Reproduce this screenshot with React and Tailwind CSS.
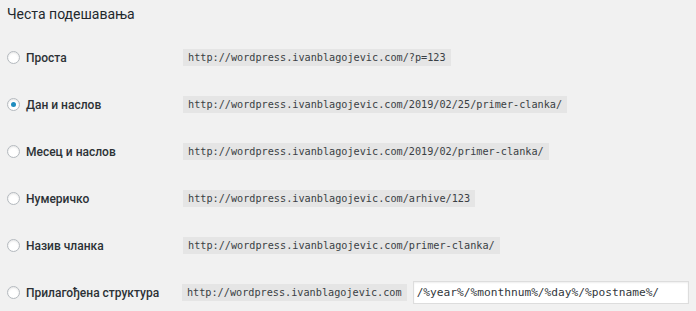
const options = [
  { label: "Проста", url: "http://wordpress.ivanblagojevic.com/?p=123" },
  { label: "Дан и наслов", url: "http://wordpress.ivanblagojevic.com/2019/02/25/primer-clanka/", checked: true },
  { label: "Месец и наслов", url: "http://wordpress.ivanblagojevic.com/2019/02/primer-clanka/" },
  { label: "Нумеричко", url: "http://wordpress.ivanblagojevic.com/arhive/123" },
  { label: "Назив чланка", url: "http://wordpress.ivanblagojevic.com/primer-clanka/" },
];

const Radio = ({ checked }) => (
  <span className="flex h-[13px] w-[13px] shrink-0 items-center justify-center rounded-full border border-[#b4b9be] bg-white shadow-[inset_0_1px_2px_rgba(0,0,0,0.1)]">
    {checked && <span className="h-[5px] w-[5px] rounded-full bg-[#1e8cbe]" />}
  </span>
);

const Code = ({ children }) => (
  <code className="bg-[#e5e5e5] px-[5px] py-[2px] font-['DejaVu_Sans_Mono',monospace] text-[10.2px] leading-[13px] text-[#3a3f44]">
    {children}
  </code>
);

export default function App() {
  return (
    <div className="h-[311px] w-[696px] overflow-hidden bg-[#f1f1f1] px-[7px] font-['Roboto',Arial,sans-serif] text-[#23282d]">
      <h2 className="flex h-[34px] items-start pt-[5px] text-[14px] leading-[18px] text-[#23282d]">Честа подешавања</h2>

      {options.map((o) => (
        <div key={o.label} className="flex h-[47px] items-center">
          <label className="flex w-[176px] items-center gap-[6px] text-[12px] font-medium text-[#2c3136]">
            <Radio checked={o.checked} />
            <span>{o.label}</span>
          </label>
          <Code>{o.url}</Code>
        </div>
      ))}

      <div className="flex h-[47px] items-center">
        <label className="flex w-[176px] items-center gap-[6px] text-[12px] font-medium text-[#2c3136]">
          <Radio />
          <span>Прилагођена структура</span>
        </label>
        <Code>http://wordpress.ivanblagojevic.com</Code>
        <input
          readOnly
          value="/%year%/%monthnum%/%day%/%postname%/"
          className="ml-[6px] h-[23px] w-[278px] border border-[#dddddd] bg-white px-[3px] font-['DejaVu_Sans_Mono',monospace] text-[11.2px] text-[#32373c] shadow-[inset_0_1px_2px_rgba(0,0,0,0.07)] outline-none"
        />
      </div>
    </div>
  );
}
